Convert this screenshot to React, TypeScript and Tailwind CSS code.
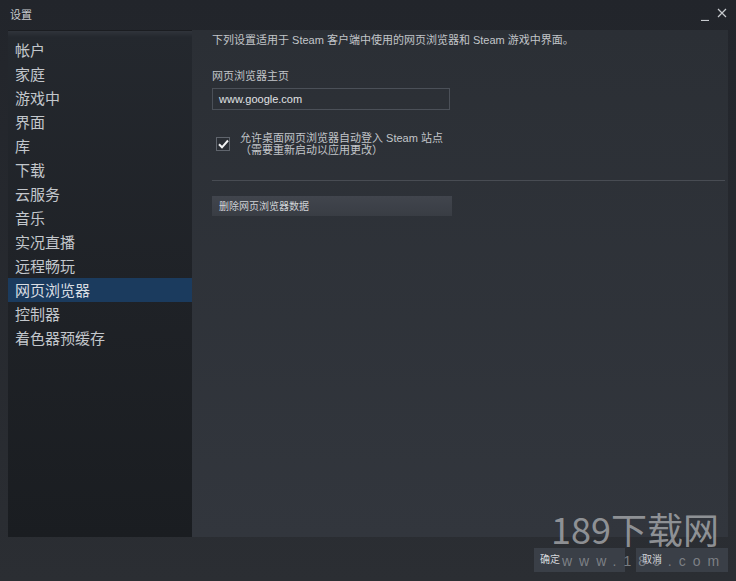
import { useState } from 'react';

const NAV_ITEMS = [
  '帐户',
  '家庭',
  '游戏中',
  '界面',
  '库',
  '下载',
  '云服务',
  '音乐',
  '实况直播',
  '远程畅玩',
  '网页浏览器',
  '控制器',
  '着色器预缓存',
];

const FONT = { fontFamily: '"Liberation Sans", "Noto Sans CJK SC", sans-serif' };

export default function App() {
  const [active, setActive] = useState('网页浏览器');
  const [autoLogin, setAutoLogin] = useState(true);

  return (
    <div
      className="relative flex h-[581px] w-[736px] flex-col overflow-hidden bg-gradient-to-b from-[#22252b] to-[#2b2e33] text-[#c6c9cd]"
      style={FONT}
    >
      {/* Title bar */}
      <div className="flex h-[30px] shrink-0 items-center justify-between pl-[10px] pr-[9px]">
        <span className="text-[11px] text-[#c8cbcf]">设置</span>
        <div className="flex items-center gap-[7px] pb-[4px]">
          <svg width="9" height="9" viewBox="0 0 9 9" className="mt-[6px]">
            <path d="M0 8.5H8" stroke="#c8cbcf" strokeWidth="1.2" />
          </svg>
          <svg width="10" height="10" viewBox="0 0 10 10">
            <path d="M1 1L9 9M9 1L1 9" stroke="#c8cbcf" strokeWidth="1.2" />
          </svg>
        </div>
      </div>

      {/* Body */}
      <div className="flex h-[507px] shrink-0 pl-[8px] pr-[8px]">
        {/* Sidebar */}
        <div className="flex w-[184px] shrink-0 flex-col bg-gradient-to-b from-[#24282e] via-[#1f2227] to-[#1a1d21]">
          <div className="h-[7px] bg-gradient-to-b from-[#30343b] to-[#24282e] border-t border-[#1b1d21]" />
          <div className="flex flex-col pt-[1px]">
            {NAV_ITEMS.map(item => (
              <button
                key={item}
                onClick={() => setActive(item)}
                className={`flex h-[24px] items-center pl-[7px] text-left text-[15px] leading-none ${
                  active === item ? 'bg-[#1b3b5e] text-[#d9dde2]' : 'text-[#c3c7cc]'
                }`}
              >
                {item}
              </button>
            ))}
          </div>
        </div>

        {/* Content */}
        <div className="flex flex-1 bg-gradient-to-b from-[#2b2f35] to-[#32363d]">
          <div className="flex flex-1 flex-col pl-[20px] pr-[3px] pt-[2px]">
            <p className="text-[11px] text-[#c2c5c9]">
              下列设置适用于 Steam 客户端中使用的网页浏览器和 Steam 游戏中界面。
            </p>

            <p className="mt-[19px] text-[11px] text-[#c2c5c9]">网页浏览器主页</p>
            <div className="mt-[4px] flex h-[22px] w-[238px] items-center border border-[#4b5058] px-[6px]">
              <span className="text-[11px] text-[#e0e2e5]">www.google.com</span>
            </div>

            <div className="mt-[22px] flex items-start">
              <button
                onClick={() => setAutoLogin(v => !v)}
                className="ml-[4px] mt-[5px] flex h-[14px] w-[14px] items-center justify-center border border-[#60656d] bg-[#2a2e34]"
              >
                {autoLogin && (
                  <svg width="11" height="10" viewBox="0 0 11 10">
                    <path d="M1 5.2L4 8.3L10 1.5" stroke="#f2f3f4" strokeWidth="2" fill="none" />
                  </svg>
                )}
              </button>
              <div className="ml-[10px] text-[11px] leading-[12px] text-[#c2c5c9]">
                <p>允许桌面网页浏览器自动登入 Steam 站点</p>
                <p>（需要重新启动以应用更改）</p>
              </div>
            </div>

            <div className="mt-[24px] h-px w-full bg-[#484c53]" />

            <button className="mt-[15px] flex h-[20px] w-[240px] items-center bg-gradient-to-b from-[#41454d] to-[#393d44] pl-[7px] text-[10px] text-[#cfd2d6]">
              删除网页浏览器数据
            </button>
          </div>
        </div>
      </div>

      {/* Footer */}
      <div className="flex flex-1 items-center justify-end gap-[11px] pr-[8px] pt-[1px]">
        <button className="flex h-[24px] w-[91px] items-center bg-[#3a3f47] pl-[6px] text-[10px] text-[#d5d8dc]">
          确定
        </button>
        <button className="flex h-[24px] w-[92px] items-center bg-[#3a3f47] pl-[6px] text-[10px] text-[#d5d8dc]">
          取消
        </button>
      </div>

      {/* Watermark */}
      <div className="pointer-events-none absolute left-[551px] top-[510px] text-[36px] leading-none text-[#a9abae]/80" style={{ fontFamily: '"Noto Sans CJK SC", sans-serif' }}>
        189下载网
      </div>
      <div className="pointer-events-none absolute left-[562px] top-[551px] text-[14px] tracking-[7px] text-[#8e9196]/80" style={{ fontFamily: '"Liberation Sans", sans-serif' }}>
        www.189.com
      </div>
    </div>
  );
}
